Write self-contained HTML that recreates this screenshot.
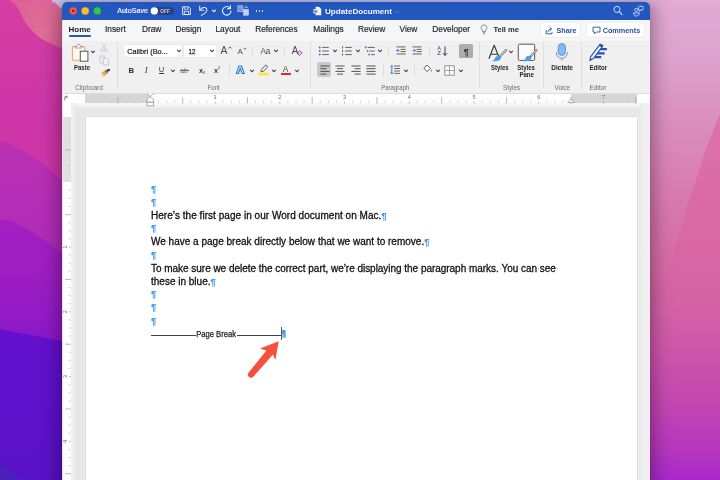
<!DOCTYPE html>
<html>
<head>
<meta charset="utf-8">
<title>UpdateDocument</title>
<style>
html,body{margin:0;padding:0;}
body{width:720px;height:480px;overflow:hidden;position:relative;background:#c436a8;font-family:"Liberation Sans",sans-serif;}
.abs{position:absolute;}
#wall{position:absolute;left:0;top:0;width:720px;height:480px;}
#win{position:absolute;left:62px;top:2px;width:588px;height:480px;border-radius:5px 5px 0 0;overflow:hidden;background:#f0f0f0;}
#shadow{position:absolute;left:62px;top:2px;width:588px;height:490px;border-radius:5px;box-shadow:0 4px 17px 4px rgba(0,0,0,.34),0 0 1px rgba(0,0,0,.35);}
.t{position:absolute;white-space:pre;line-height:1.12;color:#222;}
.ln{position:absolute;will-change:transform;white-space:pre;font-size:10px;line-height:12px;color:#111;height:12px;-webkit-text-stroke:0.28px #0c0c0c;}
.ln i{font-style:normal;display:inline-block;width:2.78px;text-align:center;color:#9cc4ee;overflow:visible;-webkit-text-stroke:0;}
.pm{color:#3f96ea;font-size:9.4px;font-weight:700;-webkit-text-stroke:0;text-shadow:0 0 1.5px #bfe0fb;}
</style>
</head>
<body>
<svg id="wall" viewBox="0 0 720 480">
  <defs>
    <linearGradient id="gl" x1="0" y1="0" x2="0" y2="1">
      <stop offset="0" stop-color="#d53ea2"/>
      <stop offset="0.10" stop-color="#d23aa5"/>
      <stop offset="0.25" stop-color="#cd35a8"/>
      <stop offset="0.40" stop-color="#cc36a9"/>
      <stop offset="1" stop-color="#c030b0"/>
    </linearGradient>
    <linearGradient id="gm" x1="0" y1="0" x2="0" y2="1">
      <stop offset="0" stop-color="#bb30b2"/>
      <stop offset="1" stop-color="#ad2ab9"/>
    </linearGradient>
    <linearGradient id="gs" x1="0" y1="0" x2="1" y2="1">
      <stop offset="0" stop-color="#dc5e98"/>
      <stop offset="0.6" stop-color="#e06e96"/>
      <stop offset="1" stop-color="#da5c9c"/>
    </linearGradient>
    <linearGradient id="gp" x1="0" y1="0" x2="0" y2="1">
      <stop offset="0" stop-color="#a320c2"/>
      <stop offset="0.5" stop-color="#9b1dc2"/>
      <stop offset="1" stop-color="#8a18c8"/>
    </linearGradient>
    <linearGradient id="gb" x1="0" y1="0" x2="0" y2="1">
      <stop offset="0" stop-color="#6410ce"/>
      <stop offset="1" stop-color="#5812c6"/>
    </linearGradient>
    <linearGradient id="gr" x1="0" y1="0" x2="0" y2="1">
      <stop offset="0" stop-color="#e1abd6"/>
      <stop offset="0.12" stop-color="#dda2cf"/>
      <stop offset="0.24" stop-color="#da90c1"/>
      <stop offset="0.42" stop-color="#d878b0"/>
      <stop offset="0.58" stop-color="#d568a6"/>
      <stop offset="0.72" stop-color="#cf57a9"/>
      <stop offset="0.84" stop-color="#c346b1"/>
      <stop offset="0.94" stop-color="#b636be"/>
      <stop offset="1" stop-color="#a828cc"/>
    </linearGradient>
    <linearGradient id="gr2" x1="0" y1="0" x2="0" y2="1">
      <stop offset="0" stop-color="#dc6ca8" stop-opacity=".8"/>
      <stop offset="0.6" stop-color="#d864a4" stop-opacity=".8"/>
      <stop offset="1" stop-color="#d460a4" stop-opacity="0"/>
    </linearGradient>
    <linearGradient id="gt" x1="0" y1="0" x2="1" y2="0">
      <stop offset="0" stop-color="#cfc4e8"/>
      <stop offset="0.5" stop-color="#c2c6f4"/>
      <stop offset="0.9" stop-color="#cfc2ec"/>
      <stop offset="1" stop-color="#e0b4dc"/>
    </linearGradient>
  </defs>
  <rect x="0" y="0" width="360" height="480" fill="url(#gl)"/>
  <path d="M9 0 C16 4 19 9 21 14 C25 24 32 31 40 38 C48 43 56 46 70 52 L70 0 Z" fill="url(#gs)"/>
  <path d="M52 0 L62 9 L70 9 L70 0 Z" fill="#cdc3e8"/>
  <path d="M0 141 C8 142 14 146 20 149 C28 153 34 158 40 162 C48 167 56 175 70 190 L70 270 L0 270 Z" fill="url(#gm)"/>
  <path d="M0 219 C14 220 28 229 40 237 C50 244 58 250 70 260 L70 345 L0 345 Z" fill="url(#gp)"/>
  <path d="M0 329 L70 342.5 L70 480 L0 480 Z" fill="url(#gb)"/>
  <path d="M0 463 L23 480 L0 480 Z" fill="#4c1ebc"/>
  <rect x="360" y="0" width="360" height="480" fill="url(#gr)"/>
  <path d="M720 114 C704 150 690 200 672 256 L652 320 L652 340 L720 340 Z" fill="url(#gr2)"/>
  <rect x="52" y="0" width="604" height="2.2" fill="url(#gt)"/>
</svg>

<div id="shadow"></div>
<div id="win">
<div class="abs" style="left:0.00px;top:0.00px;width:588.00px;height:18.00px;background:#2457be;"></div>
<div class="abs" style="left:0.00px;top:18.00px;width:588.00px;height:21.00px;background:#f6f6f6;"></div>
<div class="abs" style="left:0.00px;top:39.00px;width:588.00px;height:52.00px;background:#f0f0f0;"></div>
<div class="abs" style="left:0.00px;top:91.00px;width:588.00px;height:10.00px;background:#fdfdfd;"></div>
<div class="abs" style="left:0.00px;top:100.90px;width:588.00px;height:380.00px;background:#e7e7e7;"></div>
<div class="abs" style="left:0.00px;top:100.90px;width:588.00px;height:5.50px;background:linear-gradient(#f7f7f7,#f3f3f3 55%,#e9e9e9);"></div>
<div class="abs" style="left:8.90px;top:100.90px;width:4.40px;height:380.00px;background:#efefef;"></div>
<div class="abs" style="left:577.50px;top:100.90px;width:10.50px;height:380.00px;background:linear-gradient(90deg,#ebebeb,#f0f0f0 40%,#f1eef0);"></div>
<div class="abs" style="left:587.20px;top:18.00px;width:0.80px;height:470.00px;background:#f7ecf6;"></div>
<svg class="abs" style="left:0;top:0" width="588" height="478" viewBox="62 2 588 478"><circle cx="73.2" cy="10.9" r="3.7" fill="#f4574f" stroke="#d8443d" stroke-width=".4"/><circle cx="85.2" cy="10.9" r="3.7" fill="#f9bd2f" stroke="#dba323" stroke-width=".4"/><circle cx="97.3" cy="10.9" r="3.7" fill="#31c843" stroke="#27a835" stroke-width=".4"/><circle cx="73.2" cy="10.9" r="1.15" fill="#7e120c"/><rect x="150.2" y="6.9" width="24" height="8" rx="4" fill="#2a4179"/><circle cx="154.3" cy="10.9" r="3.65" fill="#fdfdfd"/></svg>
<svg class="abs" style="left:0;top:0" width="588" height="478" viewBox="62 2 588 478"><path d="M182.6 6.8 H188.6 L190.4 8.6 V14.6 H182.6 Z" fill="none" stroke="#e3ebfb" stroke-width=".95" stroke-linejoin="round"/><path d="M184.4 6.9 V9.3 H188 V6.9" fill="none" stroke="#e3ebfb" stroke-width=".85"/><rect x="184.3" y="11.3" width="4.4" height="3.2" fill="none" stroke="#e3ebfb" stroke-width=".85"/><path d="M199.7 6.3 V10.2 H203.7" fill="none" stroke="#e3ebfb" stroke-width="1.05" stroke-linecap="round" stroke-linejoin="round"/><path d="M200.2 9.8 C201.8 7.2 205.6 6.4 206.8 9.2 C207.8 11.8 204.6 13.6 201.4 15.2" fill="none" stroke="#e3ebfb" stroke-width="1.05" stroke-linecap="round"/><path d="M229.6 7.7 A4.25 4.25 0 1 0 231 11.0" fill="none" stroke="#e3ebfb" stroke-width="1.05" stroke-linecap="round"/><path d="M230.5 5.6 V8.6 H227.5" fill="none" stroke="#e3ebfb" stroke-width="1.05" stroke-linecap="round" stroke-linejoin="round"/><rect x="237.8" y="5.8" width="5" height="5.8" fill="#5e83d2" stroke="#b9c8ea" stroke-width=".8"/><path d="M239 7.6 H241.6 M239 9.2 H241.6" stroke="#c9d5f0" stroke-width=".6"/><rect x="243.6" y="9.6" width="4.8" height="5.6" fill="#c3cfec" stroke="#d5def3" stroke-width=".6"/><path d="M244.4 7.2 H247.2 M246.2 6 L247.4 7.2 L246.2 8.4" fill="none" stroke="#d5def3" stroke-width=".7"/></svg>
<svg class="abs" style="left:149.00px;top:7.20px;" width="6" height="4" viewBox="0 0 6 4"><path d="M1.45 1.15 L3 2.75 L4.55 1.15" fill="none" stroke="#e9effc" stroke-width="1.1" stroke-linecap="round" stroke-linejoin="round"/></svg>
<div class="abs" style="left:193.60px;top:8.00px;width:1.60px;height:1.60px;background:#e3ebfb;border-radius:50%;"></div>
<div class="abs" style="left:196.60px;top:8.00px;width:1.60px;height:1.60px;background:#e3ebfb;border-radius:50%;"></div>
<div class="abs" style="left:199.60px;top:8.00px;width:1.60px;height:1.60px;background:#e3ebfb;border-radius:50%;"></div>
<svg class="abs" style="left:251.00px;top:4.00px;" width="9" height="10" viewBox="0 0 9 10"><path d="M2.6 0.8 H6 L8.2 3 V9.2 H2.6 Z" fill="#f2f5fc"/><rect x="0.4" y="3" width="4.6" height="4.6" rx=".6" fill="#dfe7f7"/><path d="M1.3 4 L2 6.6 L2.7 4.6 L3.4 6.6 L4.1 4" fill="none" stroke="#2457be" stroke-width=".6"/></svg>
<svg class="abs" style="left:332.00px;top:7.60px;" width="6" height="4" viewBox="0 0 6 4"><path d="M1.45 1.15 L3 2.75 L4.55 1.15" fill="none" stroke="#5f86d6" stroke-width="1.0" stroke-linecap="round" stroke-linejoin="round"/></svg>
<svg class="abs" style="left:0;top:0" width="588" height="478" viewBox="62 2 588 478"><circle cx="617" cy="9.4" r="3.05" fill="none" stroke="#d3dff8" stroke-width="1"/><path d="M619.3 11.7 L622 14.6" stroke="#d3dff8" stroke-width="1.1" stroke-linecap="round"/><rect x="638.4" y="6.3" width="4.8" height="3.8" rx="1.2" fill="none" stroke="#d3dff8" stroke-width=".9"/><path d="M639.4 10 L639.2 11.4 L640.8 10.1" fill="none" stroke="#d3dff8" stroke-width=".7"/><circle cx="636.3" cy="9.8" r="1.55" fill="none" stroke="#d3dff8" stroke-width=".9"/><path d="M633.5 12.9 H639.3 C639.3 15 638 16 636.4 16 C634.8 16 633.5 15 633.5 12.9 Z" fill="none" stroke="#d3dff8" stroke-width=".9" stroke-linejoin="round"/></svg>
<div class="abs" style="left:6.80px;top:33.20px;width:22.20px;height:1.60px;background:#2457be;border-radius:.7px;"></div>
<svg class="abs" style="left:418.00px;top:21.50px;" width="8" height="11" viewBox="0 0 8 11"><path d="M4 1 A2.7 2.7 0 0 1 5.6 6 V7.4 H2.4 V6 A2.7 2.7 0 0 1 4 1 Z" fill="none" stroke="#7c7c7c" stroke-width=".85"/><path d="M2.8 8.6 H5.2 M3.2 9.8 H4.8" stroke="#7c7c7c" stroke-width=".85"/></svg>
<div class="abs" style="left:478.60px;top:21.10px;width:39.80px;height:13.90px;background:#fff;border-radius:2px;box-shadow:0 0 0 .5px #e6e6e6;"></div>
<svg class="abs" style="left:483.00px;top:23.50px;" width="9" height="9" viewBox="0 0 9 9"><path d="M1.2 4 V7.8 H7 V6.2" fill="none" stroke="#28509f" stroke-width=".9"/><path d="M3 5.6 C3.2 3.8 4.4 3 6 3 M4.8 1.4 L6.6 3 L4.8 4.6" fill="none" stroke="#28509f" stroke-width=".9" stroke-linecap="round" stroke-linejoin="round"/></svg>
<div class="abs" style="left:525.30px;top:21.10px;width:56.80px;height:13.90px;background:#fff;border-radius:2px;box-shadow:0 0 0 .5px #e6e6e6;"></div>
<svg class="abs" style="left:529.50px;top:23.70px;" width="9" height="9" viewBox="0 0 9 9"><path d="M1 1.2 H8 V6 H4.4 L2.6 7.8 V6 H1 Z" fill="none" stroke="#28509f" stroke-width=".9" stroke-linejoin="round"/></svg>
<svg class="abs" style="left:9.00px;top:41.00px;" width="19" height="20" viewBox="0 0 19 20"><rect x="1.4" y="3.6" width="12.4" height="13.6" rx="1" fill="#fdf9f2" stroke="#eaa855" stroke-width="1.1"/>
<path d="M4.4 5 V3.4 H5.8 Q6 1.2 7.6 1.2 Q9.2 1.2 9.4 3.4 H10.8 V5 Z" fill="#fbfbfb" stroke="#8f8f8f" stroke-width=".8" stroke-linejoin="round"/>
<rect x="9.3" y="8.2" width="7.6" height="10" fill="#fff" stroke="#555" stroke-width="1"/></svg>
<svg class="abs" style="left:27.80px;top:48.20px;" width="6" height="4" viewBox="0 0 6 4"><path d="M1.45 1.15 L3 2.75 L4.55 1.15" fill="none" stroke="#4a4a4a" stroke-width="1.1" stroke-linecap="round" stroke-linejoin="round"/></svg>
<svg class="abs" style="left:38.40px;top:41.00px;" width="8" height="10" viewBox="0 0 8 10"><path d="M2 0.6 L5.2 6.4 M6 0.6 L2.8 6.4" stroke="#b4c6d8" stroke-width=".8" stroke-linecap="round"/><circle cx="2" cy="7.6" r="1.2" fill="none" stroke="#b4c6d8" stroke-width=".8"/><circle cx="6" cy="7.6" r="1.2" fill="none" stroke="#b4c6d8" stroke-width=".8"/></svg>
<svg class="abs" style="left:37.00px;top:53.00px;" width="11" height="11" viewBox="0 0 11 11"><path d="M1 1 H5.4 V8 H1 Z" fill="none" stroke="#c4c4c4" stroke-width=".9"/><path d="M4.2 3.2 H7.8 L9.6 5 V10 H4.2 Z" fill="#f0f0f0" stroke="#c4c4c4" stroke-width=".9"/></svg>
<svg class="abs" style="left:37.50px;top:66.00px;" width="11" height="10" viewBox="0 0 11 10"><path d="M6.2 1.8 L9.6 0.8 L10.2 2.6 L7 4.2 Z" fill="#3d3d3d"/><path d="M5.4 2.2 L7.6 5.2 L3.6 8.8 L0.8 5.6 Z" fill="#f0a14a"/><path d="M1.6 5.2 L4.2 8.2" stroke="#fff" stroke-width=".6"/><path d="M5.2 2.4 L7.4 5.2" stroke="#3d3d3d" stroke-width="1"/></svg>
<div class="abs" style="left:55.30px;top:40.00px;width:1.00px;height:46.00px;background:#dedede;"></div>
<div class="abs" style="left:62.00px;top:42.70px;width:57.80px;height:12.70px;background:#fff;border-radius:2px;box-shadow:0 0 0 .5px #e4e4e4;"></div>
<svg class="abs" style="left:113.50px;top:47.20px;" width="6" height="4" viewBox="0 0 6 4"><path d="M1.45 1.15 L3 2.75 L4.55 1.15" fill="none" stroke="#4a4a4a" stroke-width="1.1" stroke-linecap="round" stroke-linejoin="round"/></svg>
<div class="abs" style="left:122.20px;top:42.70px;width:32.00px;height:12.70px;background:#fff;border-radius:2px;box-shadow:0 0 0 .5px #e4e4e4;"></div>
<svg class="abs" style="left:147.20px;top:47.20px;" width="6" height="4" viewBox="0 0 6 4"><path d="M1.45 1.15 L3 2.75 L4.55 1.15" fill="none" stroke="#4a4a4a" stroke-width="1.1" stroke-linecap="round" stroke-linejoin="round"/></svg>
<svg class="abs" style="left:165.60px;top:44.00px;" width="4" height="3" viewBox="0 0 4 3"><path d="M.6 2.4 L2 .8 L3.4 2.4" fill="none" stroke="#4a4a4a" stroke-width=".8"/></svg>
<svg class="abs" style="left:181.20px;top:44.80px;" width="4" height="3" viewBox="0 0 4 3"><path d="M.6 .8 L2 2.4 L3.4 .8" fill="none" stroke="#4a4a4a" stroke-width=".8"/></svg>
<div class="abs" style="left:190.40px;top:44.00px;width:1.00px;height:10.50px;background:#dedede;"></div>
<svg class="abs" style="left:210.80px;top:47.20px;" width="6" height="4" viewBox="0 0 6 4"><path d="M1.45 1.15 L3 2.75 L4.55 1.15" fill="none" stroke="#4a4a4a" stroke-width="1.1" stroke-linecap="round" stroke-linejoin="round"/></svg>
<div class="abs" style="left:222.10px;top:44.00px;width:1.00px;height:10.50px;background:#dedede;"></div>
<svg class="abs" style="left:233.60px;top:48.00px;" width="7" height="6" viewBox="0 0 7 6"><path d="M.9 3.4 L3.6 .7 L6.2 2.9 L3.5 5.5 Z" fill="#e6c2ee" stroke="#b146c2" stroke-width=".9" stroke-linejoin="round"/></svg>
<div class="abs" style="left:96.80px;top:71.20px;width:5.40px;height:0.80px;background:#3a3a3a;"></div>
<svg class="abs" style="left:107.80px;top:66.60px;" width="6" height="4" viewBox="0 0 6 4"><path d="M1.45 1.15 L3 2.75 L4.55 1.15" fill="none" stroke="#4a4a4a" stroke-width="1.1" stroke-linecap="round" stroke-linejoin="round"/></svg>
<div class="abs" style="left:117.60px;top:68.30px;width:9.40px;height:0.70px;background:#6a6a6a;"></div>
<div class="abs" style="left:166.50px;top:62.00px;width:1.00px;height:12.50px;background:#dedede;"></div>
<svg class="abs" style="left:173.00px;top:63.00px;" width="10.6" height="9.4" viewBox="0 0 10.6 9.4"><path d="M1.2 8.6 L4 1 H6.6 L9.4 8.6 H7.2 L5.3 3.2 L3.4 8.6 Z" fill="#d9ebfb" stroke="#2b7cd3" stroke-width="1.1" stroke-linejoin="round"/></svg>
<svg class="abs" style="left:186.50px;top:66.60px;" width="6" height="4" viewBox="0 0 6 4"><path d="M1.45 1.15 L3 2.75 L4.55 1.15" fill="none" stroke="#4a4a4a" stroke-width="1.1" stroke-linecap="round" stroke-linejoin="round"/></svg>
<svg class="abs" style="left:196.00px;top:62.00px;" width="11" height="12" viewBox="0 0 11 12"><path d="M7.8 1 L9.8 2.8 L5.2 7.4 L3 7.6 L3.2 5.6 Z" fill="none" stroke="#4a4a4a" stroke-width=".9" stroke-linejoin="round"/><rect x=".2" y="8.8" width="10.4" height="2.6" fill="#f7ea2a"/></svg>
<svg class="abs" style="left:208.90px;top:66.60px;" width="6" height="4" viewBox="0 0 6 4"><path d="M1.45 1.15 L3 2.75 L4.55 1.15" fill="none" stroke="#4a4a4a" stroke-width="1.1" stroke-linecap="round" stroke-linejoin="round"/></svg>
<div class="abs" style="left:219.00px;top:70.70px;width:10.20px;height:2.40px;background:#e8262a;"></div>
<svg class="abs" style="left:232.00px;top:66.60px;" width="6" height="4" viewBox="0 0 6 4"><path d="M1.45 1.15 L3 2.75 L4.55 1.15" fill="none" stroke="#4a4a4a" stroke-width="1.1" stroke-linecap="round" stroke-linejoin="round"/></svg>
<div class="abs" style="left:248.00px;top:40.00px;width:1.00px;height:46.00px;background:#dedede;"></div>
<svg class="abs" style="left:256.00px;top:43.00px;" width="12" height="12" viewBox="0 0 12 12"><circle cx="1.7" cy="2.4" r="1" fill="#2b7cd3"/><path d="M4.2 2.4 H10.8" stroke="#525252" stroke-width="0.9"/><circle cx="1.7" cy="6" r="1" fill="#2b7cd3"/><path d="M4.2 6 H10.8" stroke="#525252" stroke-width="0.9"/><circle cx="1.7" cy="9.6" r="1" fill="#2b7cd3"/><path d="M4.2 9.6 H10.8" stroke="#525252" stroke-width="0.9"/></svg>
<svg class="abs" style="left:270.00px;top:47.20px;" width="6" height="4" viewBox="0 0 6 4"><path d="M1.45 1.15 L3 2.75 L4.55 1.15" fill="none" stroke="#4a4a4a" stroke-width="1.1" stroke-linecap="round" stroke-linejoin="round"/></svg>
<svg class="abs" style="left:279.30px;top:43.00px;" width="12" height="12" viewBox="0 0 12 12"><rect x="1" y="1.2999999999999998" width="1.1" height="2.2" fill="#2b7cd3"/><path d="M4.2 2.4 H10.8" stroke="#525252" stroke-width="0.9"/><rect x="1" y="4.9" width="1.1" height="2.2" fill="#2b7cd3"/><path d="M4.2 6 H10.8" stroke="#525252" stroke-width="0.9"/><rect x="1" y="8.5" width="1.1" height="2.2" fill="#2b7cd3"/><path d="M4.2 9.6 H10.8" stroke="#525252" stroke-width="0.9"/></svg>
<svg class="abs" style="left:292.50px;top:47.20px;" width="6" height="4" viewBox="0 0 6 4"><path d="M1.45 1.15 L3 2.75 L4.55 1.15" fill="none" stroke="#4a4a4a" stroke-width="1.1" stroke-linecap="round" stroke-linejoin="round"/></svg>
<svg class="abs" style="left:301.80px;top:43.00px;" width="12" height="12" viewBox="0 0 12 12"><rect x=".8" y="1.4" width="1.6" height="1.8" fill="#2b7cd3"/><path d="M3.6 2.4 H10.8" stroke="#525252" stroke-width="0.9"/><rect x="2.8" y="5.1" width="1.4" height="1.8" fill="#2b7cd3"/><path d="M5.4 6 H10.8" stroke="#525252" stroke-width="0.9"/><rect x="4.4" y="8.7" width="1.4" height="1.8" fill="#2b7cd3"/><path d="M7 9.6 H10.8" stroke="#525252" stroke-width="0.9"/></svg>
<svg class="abs" style="left:315.00px;top:47.20px;" width="6" height="4" viewBox="0 0 6 4"><path d="M1.45 1.15 L3 2.75 L4.55 1.15" fill="none" stroke="#4a4a4a" stroke-width="1.1" stroke-linecap="round" stroke-linejoin="round"/></svg>
<div class="abs" style="left:326.20px;top:44.00px;width:1.00px;height:10.50px;background:#dedede;"></div>
<svg class="abs" style="left:334.20px;top:43.40px;" width="11" height="11" viewBox="0 0 11 11"><path d="M0.6 1.9 H9.6" stroke="#525252" stroke-width="0.9"/><path d="M4.6 4.4 H9.6" stroke="#525252" stroke-width="0.9"/><path d="M4.6 6.6 H9.6" stroke="#525252" stroke-width="0.9"/><path d="M0.6 9 H9.6" stroke="#525252" stroke-width="0.9"/><path d="M3.6 5.5 H.8 M2.2 4 L.7 5.5 L2.2 7" fill="none" stroke="#2b7cd3" stroke-width=".9"/></svg>
<svg class="abs" style="left:350.00px;top:43.40px;" width="11" height="11" viewBox="0 0 11 11"><path d="M0.6 1.9 H9.6" stroke="#525252" stroke-width="0.9"/><path d="M4.6 4.4 H9.6" stroke="#525252" stroke-width="0.9"/><path d="M4.6 6.6 H9.6" stroke="#525252" stroke-width="0.9"/><path d="M0.6 9 H9.6" stroke="#525252" stroke-width="0.9"/><path d="M.6 5.5 H3.4 M2 4 L3.5 5.5 L2 7" fill="none" stroke="#2b7cd3" stroke-width=".9"/></svg>
<div class="abs" style="left:367.00px;top:44.00px;width:1.00px;height:10.50px;background:#dedede;"></div>
<svg class="abs" style="left:380.00px;top:43.00px;" width="6" height="13" viewBox="0 0 6 13"><path d="M3 1.4 V10.2 M1 8.2 L3 10.5 L5 8.2" fill="none" stroke="#3a3a3a" stroke-width="1"/></svg>
<div class="abs" style="left:397.30px;top:42.30px;width:13.90px;height:13.30px;background:#adadad;border-radius:1.5px;"></div>
<div class="abs" style="left:255.00px;top:60.00px;width:14.30px;height:15.00px;background:#c9c9c9;border-radius:2px;"></div>
<svg class="abs" style="left:257.60px;top:63.40px;" width="11" height="11" viewBox="0 0 11 11"><path d="M0.4 1.0 H9.6" stroke="#4f4f4f" stroke-width="1"/><path d="M0.4 3.7 H6.4" stroke="#4f4f4f" stroke-width="1"/><path d="M0.4 6.4 H9.6" stroke="#4f4f4f" stroke-width="1"/><path d="M0.4 9.100000000000001 H6.4" stroke="#4f4f4f" stroke-width="1"/></svg>
<svg class="abs" style="left:273.40px;top:63.40px;" width="11" height="11" viewBox="0 0 11 11"><path d="M0.4 1.0 H9.6" stroke="#525252" stroke-width="1"/><path d="M2 3.7 H8" stroke="#525252" stroke-width="1"/><path d="M0.4 6.4 H9.6" stroke="#525252" stroke-width="1"/><path d="M2 9.100000000000001 H8" stroke="#525252" stroke-width="1"/></svg>
<svg class="abs" style="left:288.60px;top:63.40px;" width="11" height="11" viewBox="0 0 11 11"><path d="M0.4 1.0 H9.6" stroke="#525252" stroke-width="1"/><path d="M3.6 3.7 H9.6" stroke="#525252" stroke-width="1"/><path d="M0.4 6.4 H9.6" stroke="#525252" stroke-width="1"/><path d="M3.6 9.100000000000001 H9.6" stroke="#525252" stroke-width="1"/></svg>
<svg class="abs" style="left:303.80px;top:63.40px;" width="11" height="11" viewBox="0 0 11 11"><path d="M0.4 1.0 H9.6" stroke="#525252" stroke-width="1"/><path d="M0.4 3.7 H9.6" stroke="#525252" stroke-width="1"/><path d="M0.4 6.4 H9.6" stroke="#525252" stroke-width="1"/><path d="M0.4 9.100000000000001 H9.6" stroke="#525252" stroke-width="1"/></svg>
<div class="abs" style="left:321.20px;top:62.00px;width:1.00px;height:12.50px;background:#dedede;"></div>
<svg class="abs" style="left:328.00px;top:62.40px;" width="12" height="12" viewBox="0 0 12 12"><path d="M4.2 2 H10" stroke="#525252" stroke-width="0.9"/><path d="M4.2 4.5 H10" stroke="#525252" stroke-width="0.9"/><path d="M4.2 7 H10" stroke="#525252" stroke-width="0.9"/><path d="M4.2 9.4 H10" stroke="#525252" stroke-width="0.9"/><path d="M1.8 1.6 V9.8 M.5 3 L1.8 1.4 L3.1 3 M.5 8.4 L1.8 10 L3.1 8.4" fill="none" stroke="#2b7cd3" stroke-width=".9"/></svg>
<svg class="abs" style="left:341.20px;top:66.60px;" width="6" height="4" viewBox="0 0 6 4"><path d="M1.45 1.15 L3 2.75 L4.55 1.15" fill="none" stroke="#4a4a4a" stroke-width="1.1" stroke-linecap="round" stroke-linejoin="round"/></svg>
<div class="abs" style="left:352.00px;top:62.00px;width:1.00px;height:12.50px;background:#dedede;"></div>
<svg class="abs" style="left:361.40px;top:62.20px;" width="11" height="11" viewBox="0 0 11 11"><path d="M4 1 L7.4 4.4 L4.2 7.6 L.9 4.4 Z" fill="#fff" stroke="#4a4a4a" stroke-width=".9" stroke-linejoin="round"/><path d="M8.4 5.4 Q9.4 7 8.4 7.8 Q7.4 7 8.4 5.4 Z" fill="#4a4a4a"/></svg>
<svg class="abs" style="left:372.50px;top:66.60px;" width="6" height="4" viewBox="0 0 6 4"><path d="M1.45 1.15 L3 2.75 L4.55 1.15" fill="none" stroke="#4a4a4a" stroke-width="1.1" stroke-linecap="round" stroke-linejoin="round"/></svg>
<svg class="abs" style="left:382.00px;top:62.60px;" width="11" height="11" viewBox="0 0 11 11"><rect x=".8" y=".8" width="9.4" height="9.4" fill="#fff" stroke="#8a8a8a" stroke-width=".9"/><path d="M5.5 .8 V10.2 M.8 5.5 H10.2" stroke="#8a8a8a" stroke-width=".8"/></svg>
<svg class="abs" style="left:395.50px;top:66.60px;" width="6" height="4" viewBox="0 0 6 4"><path d="M1.45 1.15 L3 2.75 L4.55 1.15" fill="none" stroke="#4a4a4a" stroke-width="1.1" stroke-linecap="round" stroke-linejoin="round"/></svg>
<div class="abs" style="left:417.30px;top:40.00px;width:1.00px;height:46.00px;background:#dedede;"></div>
<svg class="abs" style="left:0;top:0" width="588" height="478" viewBox="62 2 588 478"><path d="M488.9 58.8 L494.2 45.2 L499.6 58.8 M490.7 54.2 H497.7" fill="none" stroke="#3a3a3a" stroke-width="1.15" stroke-linejoin="round"/><path d="M506.0 50.2 L500.4 56.0" stroke="#6e6e6e" stroke-width="2.3" stroke-linecap="round"/><path d="M506.0 50.2 L500.4 56.0" stroke="#f4f4f4" stroke-width="1.0" stroke-linecap="round"/><path d="M501.0 55.9 Q502.0 58.3 499.8 60.1 Q497.0 61.9 492.0 61.1 Q494.8 59.9 495.20000000000005 58.1 Q496.0 55.3 501.0 55.9 Z" fill="#4b9cec"/><rect x="518.3" y="44.2" width="16.4" height="16.2" rx="1.2" fill="#fafafa" stroke="#555" stroke-width="1"/><path d="M527 62 L538 62 L538 50 Z" fill="#f0f0f0" opacity="0"/><path d="M536.4 50.2 L530.8 56.0" stroke="#6e6e6e" stroke-width="2.3" stroke-linecap="round"/><path d="M536.4 50.2 L530.8 56.0" stroke="#f4f4f4" stroke-width="1.0" stroke-linecap="round"/><path d="M531.4 55.9 Q532.4 58.3 530.2 60.1 Q527.4 61.9 522.4 61.1 Q525.2 59.9 525.6 58.1 Q526.4 55.3 531.4 55.9 Z" fill="#4b9cec"/></svg>
<svg class="abs" style="left:446.20px;top:48.30px;" width="6" height="4" viewBox="0 0 6 4"><path d="M1.45 1.15 L3 2.75 L4.55 1.15" fill="none" stroke="#4a4a4a" stroke-width="1.1" stroke-linecap="round" stroke-linejoin="round"/></svg>
<div class="abs" style="left:481.30px;top:40.00px;width:1.00px;height:46.00px;background:#dedede;"></div>
<svg class="abs" style="left:0;top:0" width="588" height="478" viewBox="62 2 588 478"><rect x="558.2" y="43.6" width="7.3" height="11.8" rx="3.65" fill="#85baee" stroke="#4a92e2" stroke-width=".9"/><path d="M556.3 52.2 Q556.5 58.2 561.85 58.2 Q567.2 58.2 567.4 52.2" fill="none" stroke="#7f8fa0" stroke-width="1"/><path d="M561.85 58.2 V60.8" stroke="#7f8fa0" stroke-width="1"/></svg>
<div class="abs" style="left:518.80px;top:40.00px;width:1.00px;height:46.00px;background:#dedede;"></div>
<svg class="abs" style="left:0;top:0" width="588" height="478" viewBox="62 2 588 478"><path d="M599.4 49.1 H606.9 M597 53.3 H604.6 M594.4 57.2 H601.3" stroke="#2552b4" stroke-width="2.2"/><path d="M600.2 44.2 L603.0 45.7 L593.4 58.6 L590.0 60.6 L590.6 56.8 Z" fill="#f6f9fe" stroke="#2552b4" stroke-width="1.15" stroke-linejoin="round"/><path d="M600.4 44.0 L603.2 45.6 L601.9 47.4 L599.1 45.8 Z" fill="#2552b4"/><path d="M590.0 60.6 L590.5 58.0 L592.2 59.2 Z" fill="#2552b4"/></svg>
<div class="abs" style="left:0.00px;top:91.30px;width:588.00px;height:9.60px;background:#fefefe;"></div>
<div class="abs" style="left:23.40px;top:91.30px;width:64.90px;height:9.60px;background:#d6d6d6;"></div>
<div class="abs" style="left:509.17px;top:91.30px;width:65.53px;height:9.60px;background:#d6d6d6;"></div>
<div class="abs" style="left:0.00px;top:90.80px;width:588.00px;height:0.60px;background:#dcdcdc;"></div>
<div class="abs" style="left:0.00px;top:100.90px;width:8.90px;height:380.00px;background:#fefefe;"></div>
<div class="abs" style="left:0.00px;top:115.30px;width:8.90px;height:65.00px;background:#e0e0e0;"></div>
<svg class="abs" style="left:0;top:0" width="588" height="478" viewBox="62 2 588 478"><path d="M93.64 100.4 V102.8" stroke="#c2c2c2" stroke-width=".7"/><path d="M101.74 100.4 V102.8" stroke="#c2c2c2" stroke-width=".7"/><path d="M109.83 100.4 V102.8" stroke="#c2c2c2" stroke-width=".7"/><path d="M117.93 97.2 V103.6" stroke="#9c9c9c" stroke-width=".7"/><path d="M126.02 100.4 V102.8" stroke="#c2c2c2" stroke-width=".7"/><path d="M134.11 100.4 V102.8" stroke="#c2c2c2" stroke-width=".7"/><path d="M142.21 100.4 V102.8" stroke="#c2c2c2" stroke-width=".7"/><path d="M158.39 100.4 V102.8" stroke="#c2c2c2" stroke-width=".7"/><path d="M166.49 100.4 V102.8" stroke="#c2c2c2" stroke-width=".7"/><path d="M174.58 100.4 V102.8" stroke="#c2c2c2" stroke-width=".7"/><path d="M182.68 97.2 V103.6" stroke="#9c9c9c" stroke-width=".7"/><path d="M190.77 100.4 V102.8" stroke="#c2c2c2" stroke-width=".7"/><path d="M198.86 100.4 V102.8" stroke="#c2c2c2" stroke-width=".7"/><path d="M206.96 100.4 V102.8" stroke="#c2c2c2" stroke-width=".7"/><path d="M215.05 101.6 V103.6" stroke="#9a9a9a" stroke-width=".7"/><path d="M223.14 100.4 V102.8" stroke="#c2c2c2" stroke-width=".7"/><path d="M231.24 100.4 V102.8" stroke="#c2c2c2" stroke-width=".7"/><path d="M239.33 100.4 V102.8" stroke="#c2c2c2" stroke-width=".7"/><path d="M247.43 97.2 V103.6" stroke="#9c9c9c" stroke-width=".7"/><path d="M255.52 100.4 V102.8" stroke="#c2c2c2" stroke-width=".7"/><path d="M263.61 100.4 V102.8" stroke="#c2c2c2" stroke-width=".7"/><path d="M271.71 100.4 V102.8" stroke="#c2c2c2" stroke-width=".7"/><path d="M279.80 101.6 V103.6" stroke="#9a9a9a" stroke-width=".7"/><path d="M287.89 100.4 V102.8" stroke="#c2c2c2" stroke-width=".7"/><path d="M295.99 100.4 V102.8" stroke="#c2c2c2" stroke-width=".7"/><path d="M304.08 100.4 V102.8" stroke="#c2c2c2" stroke-width=".7"/><path d="M312.18 97.2 V103.6" stroke="#9c9c9c" stroke-width=".7"/><path d="M320.27 100.4 V102.8" stroke="#c2c2c2" stroke-width=".7"/><path d="M328.36 100.4 V102.8" stroke="#c2c2c2" stroke-width=".7"/><path d="M336.46 100.4 V102.8" stroke="#c2c2c2" stroke-width=".7"/><path d="M344.55 101.6 V103.6" stroke="#9a9a9a" stroke-width=".7"/><path d="M352.64 100.4 V102.8" stroke="#c2c2c2" stroke-width=".7"/><path d="M360.74 100.4 V102.8" stroke="#c2c2c2" stroke-width=".7"/><path d="M368.83 100.4 V102.8" stroke="#c2c2c2" stroke-width=".7"/><path d="M376.93 97.2 V103.6" stroke="#9c9c9c" stroke-width=".7"/><path d="M385.02 100.4 V102.8" stroke="#c2c2c2" stroke-width=".7"/><path d="M393.11 100.4 V102.8" stroke="#c2c2c2" stroke-width=".7"/><path d="M401.21 100.4 V102.8" stroke="#c2c2c2" stroke-width=".7"/><path d="M409.30 101.6 V103.6" stroke="#9a9a9a" stroke-width=".7"/><path d="M417.39 100.4 V102.8" stroke="#c2c2c2" stroke-width=".7"/><path d="M425.49 100.4 V102.8" stroke="#c2c2c2" stroke-width=".7"/><path d="M433.58 100.4 V102.8" stroke="#c2c2c2" stroke-width=".7"/><path d="M441.68 97.2 V103.6" stroke="#9c9c9c" stroke-width=".7"/><path d="M449.77 100.4 V102.8" stroke="#c2c2c2" stroke-width=".7"/><path d="M457.86 100.4 V102.8" stroke="#c2c2c2" stroke-width=".7"/><path d="M465.96 100.4 V102.8" stroke="#c2c2c2" stroke-width=".7"/><path d="M474.05 101.6 V103.6" stroke="#9a9a9a" stroke-width=".7"/><path d="M482.14 100.4 V102.8" stroke="#c2c2c2" stroke-width=".7"/><path d="M490.24 100.4 V102.8" stroke="#c2c2c2" stroke-width=".7"/><path d="M498.33 100.4 V102.8" stroke="#c2c2c2" stroke-width=".7"/><path d="M506.43 97.2 V103.6" stroke="#9c9c9c" stroke-width=".7"/><path d="M514.52 100.4 V102.8" stroke="#c2c2c2" stroke-width=".7"/><path d="M522.61 100.4 V102.8" stroke="#c2c2c2" stroke-width=".7"/><path d="M530.71 100.4 V102.8" stroke="#c2c2c2" stroke-width=".7"/><path d="M538.80 101.6 V103.6" stroke="#9a9a9a" stroke-width=".7"/><path d="M546.89 100.4 V102.8" stroke="#c2c2c2" stroke-width=".7"/><path d="M554.99 100.4 V102.8" stroke="#c2c2c2" stroke-width=".7"/><path d="M563.08 100.4 V102.8" stroke="#c2c2c2" stroke-width=".7"/><path d="M571.17 97.2 V103.6" stroke="#9c9c9c" stroke-width=".7"/><path d="M579.27 100.4 V102.8" stroke="#c2c2c2" stroke-width=".7"/><path d="M587.36 100.4 V102.8" stroke="#c2c2c2" stroke-width=".7"/><path d="M595.46 100.4 V102.8" stroke="#c2c2c2" stroke-width=".7"/><path d="M603.55 101.6 V103.6" stroke="#9a9a9a" stroke-width=".7"/><path d="M611.64 100.4 V102.8" stroke="#c2c2c2" stroke-width=".7"/><path d="M619.74 100.4 V102.8" stroke="#c2c2c2" stroke-width=".7"/><path d="M627.83 100.4 V102.8" stroke="#c2c2c2" stroke-width=".7"/><path d="M635.92 97.2 V103.6" stroke="#9c9c9c" stroke-width=".7"/><path d="M68.3 125.64 H70.6" stroke="#c2c2c2" stroke-width=".7"/><path d="M68.3 133.74 H70.6" stroke="#c2c2c2" stroke-width=".7"/><path d="M68.3 141.83 H70.6" stroke="#c2c2c2" stroke-width=".7"/><path d="M65.2 149.93 H70.8" stroke="#9c9c9c" stroke-width=".7"/><path d="M68.3 158.02 H70.6" stroke="#c2c2c2" stroke-width=".7"/><path d="M68.3 166.11 H70.6" stroke="#c2c2c2" stroke-width=".7"/><path d="M68.3 174.21 H70.6" stroke="#c2c2c2" stroke-width=".7"/><path d="M68.3 190.39 H70.6" stroke="#c2c2c2" stroke-width=".7"/><path d="M68.3 198.49 H70.6" stroke="#c2c2c2" stroke-width=".7"/><path d="M68.3 206.58 H70.6" stroke="#c2c2c2" stroke-width=".7"/><path d="M65.2 214.68 H70.8" stroke="#9c9c9c" stroke-width=".7"/><path d="M68.3 222.77 H70.6" stroke="#c2c2c2" stroke-width=".7"/><path d="M68.3 230.86 H70.6" stroke="#c2c2c2" stroke-width=".7"/><path d="M68.3 238.96 H70.6" stroke="#c2c2c2" stroke-width=".7"/><path d="M68.9 247.05 H70.8" stroke="#9a9a9a" stroke-width=".7"/><path d="M68.3 255.14 H70.6" stroke="#c2c2c2" stroke-width=".7"/><path d="M68.3 263.24 H70.6" stroke="#c2c2c2" stroke-width=".7"/><path d="M68.3 271.33 H70.6" stroke="#c2c2c2" stroke-width=".7"/><path d="M65.2 279.43 H70.8" stroke="#9c9c9c" stroke-width=".7"/><path d="M68.3 287.52 H70.6" stroke="#c2c2c2" stroke-width=".7"/><path d="M68.3 295.61 H70.6" stroke="#c2c2c2" stroke-width=".7"/><path d="M68.3 303.71 H70.6" stroke="#c2c2c2" stroke-width=".7"/><path d="M68.9 311.80 H70.8" stroke="#9a9a9a" stroke-width=".7"/><path d="M68.3 319.89 H70.6" stroke="#c2c2c2" stroke-width=".7"/><path d="M68.3 327.99 H70.6" stroke="#c2c2c2" stroke-width=".7"/><path d="M68.3 336.08 H70.6" stroke="#c2c2c2" stroke-width=".7"/><path d="M65.2 344.18 H70.8" stroke="#9c9c9c" stroke-width=".7"/><path d="M68.3 352.27 H70.6" stroke="#c2c2c2" stroke-width=".7"/><path d="M68.3 360.36 H70.6" stroke="#c2c2c2" stroke-width=".7"/><path d="M68.3 368.46 H70.6" stroke="#c2c2c2" stroke-width=".7"/><path d="M68.9 376.55 H70.8" stroke="#9a9a9a" stroke-width=".7"/><path d="M68.3 384.64 H70.6" stroke="#c2c2c2" stroke-width=".7"/><path d="M68.3 392.74 H70.6" stroke="#c2c2c2" stroke-width=".7"/><path d="M68.3 400.83 H70.6" stroke="#c2c2c2" stroke-width=".7"/><path d="M65.2 408.93 H70.8" stroke="#9c9c9c" stroke-width=".7"/><path d="M68.3 417.02 H70.6" stroke="#c2c2c2" stroke-width=".7"/><path d="M68.3 425.11 H70.6" stroke="#c2c2c2" stroke-width=".7"/><path d="M68.3 433.21 H70.6" stroke="#c2c2c2" stroke-width=".7"/><path d="M68.9 441.30 H70.8" stroke="#9a9a9a" stroke-width=".7"/><path d="M68.3 449.39 H70.6" stroke="#c2c2c2" stroke-width=".7"/><path d="M68.3 457.49 H70.6" stroke="#c2c2c2" stroke-width=".7"/><path d="M68.3 465.58 H70.6" stroke="#c2c2c2" stroke-width=".7"/><path d="M65.2 473.68 H70.8" stroke="#9c9c9c" stroke-width=".7"/><path d="M146.9 93.4 L153.70000000000002 99.6 V102.2 H146.9 V99.6 L153.70000000000002 93.4" fill="#fff" stroke="#8a8a8a" stroke-width=".7" stroke-linejoin="round"/><rect x="146.9" y="102.2" width="6.8" height="3.7" fill="#fff" stroke="#8a8a8a" stroke-width=".7"/><path d="M567.775 102.6 L571.175 98.8 L574.5749999999999 102.6 Z" fill="#fff" stroke="#8a8a8a" stroke-width=".7" stroke-linejoin="round"/><path d="M64.8 100.4 V96.8 H67.2 M66.2 95.6 L67.5 96.8 L66.2 98" fill="none" stroke="#555" stroke-width=".75"/></svg>
<div class="abs" style="left:0.00px;top:18.00px;width:0.80px;height:470.00px;background:#f2d9f0;"></div>
<svg class="abs" style="left:0;top:0;will-change:transform" width="588" height="478" viewBox="62 2 588 478"><g font-family="Liberation Sans, sans-serif"><text x="117.20" y="13.00" font-size="7.1" fill="#edf2fd" font-weight="400" text-anchor="start" stroke="#edf2fd" stroke-width=".2">AutoSave</text><text x="160.20" y="12.60" font-size="4.7" fill="#c6d0ea" font-weight="700" text-anchor="start" letter-spacing=".15">OFF</text><text x="325.00" y="14.00" font-size="8.1" fill="#f2f6ff" font-weight="700" text-anchor="start" >UpdateDocument</text><text x="68.60" y="32.00" font-size="8.0" fill="#1b1b1b" font-weight="700" text-anchor="start" >Home</text><text x="105.00" y="32.00" font-size="8.3" fill="#262626" font-weight="400" text-anchor="start" stroke="#262626" stroke-width=".18">Insert</text><text x="142.00" y="32.00" font-size="8.3" fill="#262626" font-weight="400" text-anchor="start" stroke="#262626" stroke-width=".18">Draw</text><text x="175.50" y="32.00" font-size="8.3" fill="#262626" font-weight="400" text-anchor="start" stroke="#262626" stroke-width=".18">Design</text><text x="215.50" y="32.00" font-size="8.3" fill="#262626" font-weight="400" text-anchor="start" stroke="#262626" stroke-width=".18">Layout</text><text x="255.20" y="32.00" font-size="8.3" fill="#262626" font-weight="400" text-anchor="start" stroke="#262626" stroke-width=".18">References</text><text x="313.30" y="32.00" font-size="8.3" fill="#262626" font-weight="400" text-anchor="start" stroke="#262626" stroke-width=".18">Mailings</text><text x="358.00" y="32.00" font-size="8.3" fill="#262626" font-weight="400" text-anchor="start" stroke="#262626" stroke-width=".18">Review</text><text x="399.50" y="32.00" font-size="8.3" fill="#262626" font-weight="400" text-anchor="start" stroke="#262626" stroke-width=".18">View</text><text x="432.30" y="32.00" font-size="8.3" fill="#262626" font-weight="400" text-anchor="start" stroke="#262626" stroke-width=".18">Developer</text><text x="493.50" y="32.00" font-size="7.9" fill="#2a2a2a" font-weight="700" text-anchor="start"  textLength="25.50" lengthAdjust="spacingAndGlyphs">Tell me</text><text x="556.50" y="33.00" font-size="8.0" fill="#28509f" font-weight="700" text-anchor="start"  textLength="20.00" lengthAdjust="spacingAndGlyphs">Share</text><text x="602.70" y="33.00" font-size="8.0" fill="#28509f" font-weight="700" text-anchor="start"  textLength="37.50" lengthAdjust="spacingAndGlyphs">Comments</text><text x="74.00" y="69.80" font-size="6.7" fill="#1e1e1e" font-weight="700" text-anchor="start"  textLength="16.00" lengthAdjust="spacingAndGlyphs">Paste</text><text x="75.30" y="89.60" font-size="6.5" fill="#6c6c6c" font-weight="400" text-anchor="start"  textLength="27.50" lengthAdjust="spacingAndGlyphs">Clipboard</text><text x="127.30" y="54.00" font-size="7.4" fill="#1a1a1a" font-weight="400" text-anchor="start" stroke="#1a1a1a" stroke-width=".2" textLength="40.50" lengthAdjust="spacingAndGlyphs">Calibri (Bo...</text><text x="188.40" y="53.60" font-size="7.4" fill="#1a1a1a" font-weight="400" text-anchor="start" stroke="#1a1a1a" stroke-width=".25" textLength="7.00" lengthAdjust="spacingAndGlyphs">12</text><text x="220.60" y="53.80" font-size="10.4" fill="#4a4a4a" font-weight="400" text-anchor="start" >A</text><text x="237.60" y="53.80" font-size="8.0" fill="#4a4a4a" font-weight="400" text-anchor="start" >A</text><text x="260.40" y="54.00" font-size="8.2" fill="#4a4a4a" font-weight="400" text-anchor="start" >Aa</text><text x="291.80" y="53.80" font-size="10" fill="#4a4a4a" font-weight="400" text-anchor="start" >A</text><text x="128.60" y="72.60" font-size="7.8" fill="#2d2d2d" font-weight="700" text-anchor="start" >B</text><text x="144.80" y="72.80" font-size="8.8" fill="#3a3a3a" font-weight="400" text-anchor="start" font-style="italic" font-family="Liberation Serif">I</text><text x="158.80" y="72.40" font-size="7.6" fill="#3a3a3a" font-weight="400" text-anchor="start" >U</text><text x="180.30" y="72.80" font-size="6.6" fill="#6a6a6a" font-weight="400" text-anchor="start"  textLength="7.60" lengthAdjust="spacingAndGlyphs">ab</text><text x="199.00" y="72.80" font-size="7.4" fill="#3a3a3a" font-weight="700" text-anchor="start" >x</text><text x="203.00" y="74.40" font-size="3.8" fill="#2b7cd3" font-weight="700" text-anchor="start" >2</text><text x="214.00" y="72.80" font-size="7.4" fill="#3a3a3a" font-weight="700" text-anchor="start" >x</text><text x="218.00" y="69.20" font-size="3.8" fill="#2b7cd3" font-weight="700" text-anchor="start" >2</text><text x="282.80" y="71.60" font-size="8.4" fill="#4a4a4a" font-weight="400" text-anchor="start" >A</text><text x="207.60" y="89.60" font-size="6.5" fill="#6c6c6c" font-weight="400" text-anchor="start"  textLength="12.20" lengthAdjust="spacingAndGlyphs">Font</text><text x="437.20" y="50.30" font-size="5.2" fill="#2b7cd3" font-weight="700" text-anchor="start" >A</text><text x="437.20" y="55.30" font-size="6.0" fill="#333" font-weight="400" text-anchor="start" >Z</text><text x="466.30" y="55.00" font-size="9" fill="#2f2f2f" font-weight="700" text-anchor="middle" >¶</text><text x="381.20" y="89.60" font-size="6.5" fill="#6c6c6c" font-weight="400" text-anchor="start"  textLength="28.30" lengthAdjust="spacingAndGlyphs">Paragraph</text><text x="491.00" y="69.80" font-size="6.7" fill="#262626" font-weight="700" text-anchor="start"  textLength="17.60" lengthAdjust="spacingAndGlyphs">Styles</text><text x="517.30" y="69.80" font-size="6.7" fill="#262626" font-weight="700" text-anchor="start"  textLength="17.50" lengthAdjust="spacingAndGlyphs">Styles</text><text x="519.40" y="76.80" font-size="6.7" fill="#262626" font-weight="700" text-anchor="start"  textLength="14.60" lengthAdjust="spacingAndGlyphs">Pane</text><text x="503.00" y="89.60" font-size="6.5" fill="#6c6c6c" font-weight="400" text-anchor="start"  textLength="17.00" lengthAdjust="spacingAndGlyphs">Styles</text><text x="551.30" y="69.80" font-size="6.7" fill="#1e1e1e" font-weight="700" text-anchor="start"  textLength="21.70" lengthAdjust="spacingAndGlyphs">Dictate</text><text x="554.50" y="89.60" font-size="6.5" fill="#6c6c6c" font-weight="400" text-anchor="start"  textLength="15.50" lengthAdjust="spacingAndGlyphs">Voice</text><text x="589.50" y="69.80" font-size="6.7" fill="#1e1e1e" font-weight="700" text-anchor="start"  textLength="17.50" lengthAdjust="spacingAndGlyphs">Editor</text><text x="589.50" y="89.60" font-size="6.5" fill="#6c6c6c" font-weight="400" text-anchor="start"  textLength="16.80" lengthAdjust="spacingAndGlyphs">Editor</text><text x="215.05" y="98.90" font-size="5.6" fill="#707070" font-weight="400" text-anchor="middle" >1</text><text x="279.80" y="98.90" font-size="5.6" fill="#707070" font-weight="400" text-anchor="middle" >2</text><text x="344.55" y="98.90" font-size="5.6" fill="#707070" font-weight="400" text-anchor="middle" >3</text><text x="409.30" y="98.90" font-size="5.6" fill="#707070" font-weight="400" text-anchor="middle" >4</text><text x="474.05" y="98.90" font-size="5.6" fill="#707070" font-weight="400" text-anchor="middle" >5</text><text x="538.80" y="98.90" font-size="5.6" fill="#707070" font-weight="400" text-anchor="middle" >6</text><text x="603.55" y="98.90" font-size="5.6" fill="#707070" font-weight="400" text-anchor="middle" >7</text><text x="66.90" y="247.05" font-size="5.4" fill="#707070" font-weight="400" text-anchor="middle" transform="rotate(-90 66.9 247.05)">1</text><text x="66.90" y="311.80" font-size="5.4" fill="#707070" font-weight="400" text-anchor="middle" transform="rotate(-90 66.9 311.80)">2</text><text x="66.90" y="376.55" font-size="5.4" fill="#707070" font-weight="400" text-anchor="middle" transform="rotate(-90 66.9 376.55)">3</text><text x="66.90" y="441.30" font-size="5.4" fill="#707070" font-weight="400" text-anchor="middle" transform="rotate(-90 66.9 441.30)">4</text></g></svg>
<div class="abs" style="left:24.40px;top:115.30px;width:550.30px;height:370.00px;background:#fff;box-shadow:0 0 0 .6px #d2d2d2,0 0 2px 1.5px rgba(248,248,248,.7);"></div>
<div class="ln" style="left:89px;top:180.60px;letter-spacing:0px"><span class="pm">¶</span></div>
<div class="ln" style="left:89px;top:193.80px;letter-spacing:0px"><span class="pm">¶</span></div>
<div class="ln" style="left:89px;top:207.70px;letter-spacing:0.045px">Here’s<i>·</i>the<i>·</i>first<i>·</i>page<i>·</i>in<i>·</i>our<i>·</i>Word<i>·</i>document<i>·</i>on<i>·</i>Mac.<span class="pm">¶</span></div>
<div class="ln" style="left:89px;top:220.20px;letter-spacing:0px"><span class="pm">¶</span></div>
<div class="ln" style="left:89px;top:234.10px;letter-spacing:0.012px">We<i>·</i>have<i>·</i>a<i>·</i>page<i>·</i>break<i>·</i>directly<i>·</i>below<i>·</i>that<i>·</i>we<i>·</i>want<i>·</i>to<i>·</i>remove.<span class="pm">¶</span></div>
<div class="ln" style="left:89px;top:246.60px;letter-spacing:0px"><span class="pm">¶</span></div>
<div class="ln" style="left:89px;top:260.50px;letter-spacing:-0.036px">To<i>·</i>make<i>·</i>sure<i>·</i>we<i>·</i>delete<i>·</i>the<i>·</i>correct<i>·</i>part,<i>·</i>we’re<i>·</i>displaying<i>·</i>the<i>·</i>paragraph<i>·</i>marks.<i>·</i>You<i>·</i>can<i>·</i>see<i>·</i></div>
<div class="ln" style="left:89px;top:273.70px;letter-spacing:0px">these<i>·</i>in<i>·</i>blue.<span class="pm">¶</span></div>
<div class="ln" style="left:89px;top:286.20px;letter-spacing:0px"><span class="pm">¶</span></div>
<div class="ln" style="left:89px;top:299.40px;letter-spacing:0px"><span class="pm">¶</span></div>
<div class="ln" style="left:89px;top:312.60px;letter-spacing:0px"><span class="pm">¶</span></div>
<div class="abs" style="left:89.00px;top:332.50px;width:45.00px;height:1.00px;background:#444;"></div>
<div class="abs" style="left:175.00px;top:332.50px;width:44.30px;height:1.00px;background:#444;"></div>
<div class="abs" style="left:218.60px;top:325.00px;width:0.90px;height:12.70px;background:#5a5a5a;"></div>
<div class="abs" style="left:219.70px;top:328.00px;width:4.30px;height:7.60px;background:#8cc4f6;border-radius:1px;"></div>
<div class="abs" style="left:219.80px;top:328.20px;width:3.40px;height:3.40px;background:#3f98e8;border-radius:1.4px 0 0 1.4px;"></div>
<div class="abs" style="left:222.20px;top:328.20px;width:0.80px;height:7.20px;background:#4ea2ec;"></div>
<svg class="abs" style="left:0;top:0" width="588" height="478" viewBox="62 2 588 478"><path fill="#f4503e" d="M278.75 341.2 L260 348.5 L266.4 350.6 L248.5 372.75 A3.1 3.1 0 0 0 253.3 376.65 L273 354.5 L275.4 360.1 Z"/></svg>
<svg class="abs" style="left:0;top:0;will-change:transform" width="588" height="478" viewBox="62 2 588 478"><g font-family="Liberation Sans, sans-serif"><text x="196.20" y="337.10" font-size="8.3" fill="#1c1c1c" font-weight="400" text-anchor="start" stroke="#1c1c1c" stroke-width=".25" textLength="39.80" lengthAdjust="spacingAndGlyphs">Page Break</text></g></svg>
</div>
</body>
</html>
